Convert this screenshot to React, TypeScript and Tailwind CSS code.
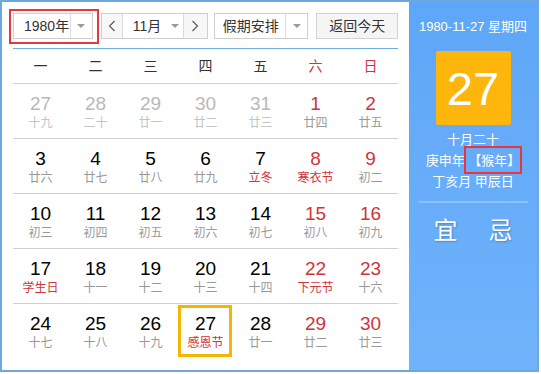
import React from "react";

type Cell = { d: number; l: string; other?: boolean; red?: boolean; lred?: boolean; today?: boolean };

const rows: Cell[][] = [
  [
    { d: 27, l: "十九", other: true },
    { d: 28, l: "二十", other: true },
    { d: 29, l: "廿一", other: true },
    { d: 30, l: "廿二", other: true },
    { d: 31, l: "廿三", other: true },
    { d: 1, l: "廿四", red: true },
    { d: 2, l: "廿五", red: true },
  ],
  [
    { d: 3, l: "廿六" },
    { d: 4, l: "廿七" },
    { d: 5, l: "廿八" },
    { d: 6, l: "廿九" },
    { d: 7, l: "立冬", lred: true },
    { d: 8, l: "寒衣节", red: true, lred: true },
    { d: 9, l: "初二", red: true },
  ],
  [
    { d: 10, l: "初三" },
    { d: 11, l: "初四" },
    { d: 12, l: "初五" },
    { d: 13, l: "初六" },
    { d: 14, l: "初七" },
    { d: 15, l: "初八", red: true },
    { d: 16, l: "初九", red: true },
  ],
  [
    { d: 17, l: "学生日", lred: true },
    { d: 18, l: "十一" },
    { d: 19, l: "十二" },
    { d: 20, l: "十三" },
    { d: 21, l: "十四" },
    { d: 22, l: "下元节", red: true, lred: true },
    { d: 23, l: "十六", red: true },
  ],
  [
    { d: 24, l: "十七" },
    { d: 25, l: "十八" },
    { d: 26, l: "十九" },
    { d: 27, l: "感恩节", lred: true, today: true },
    { d: 28, l: "廿一" },
    { d: 29, l: "廿二", red: true },
    { d: 30, l: "廿三", red: true },
  ],
];

const Caret = () => (
  <span className="block w-0 h-0 border-l-[4px] border-r-[4px] border-t-[4px] border-l-transparent border-r-transparent border-t-[#9a9a9a]" />
);

const Chevron = ({ dir }: { dir: "l" | "r" }) => (
  <svg width="8" height="12" viewBox="0 0 8 12">
    <path
      d={dir === "l" ? "M6.5 1 L1.5 6 L6.5 11" : "M1.5 1 L6.5 6 L1.5 11"}
      fill="none"
      stroke="#555"
      strokeWidth="1.1"
    />
  </svg>
);

export default function App() {
  return (
    <div className="w-[541px] h-[374px] bg-white font-['Liberation_Sans','Noto_Sans_CJK_SC',sans-serif]">
      <div className="w-[539px] h-[372px] border-2 border-[#6ea7db] flex">
        {/* left */}
        <div className="w-[407px] h-full bg-white px-[11px] pt-[11px] flex flex-col">
          {/* toolbar */}
          <div className="flex h-[26px] items-stretch text-[14px] text-[#333] whitespace-nowrap">
            <div className="relative w-[80px] flex border border-[#cfcfcf] bg-white">
              <div className="w-[56px] flex items-center pl-[10px] whitespace-nowrap">1980年</div>
              <div className="flex-1 border-l border-[#dcdcdc] flex items-center justify-center">
                <Caret />
              </div>
              <div className="absolute -left-[5px] -top-[5px] -right-[7px] -bottom-[6px] border-2 border-[#e8363c]" />
            </div>
            <div className="ml-[8px] flex border border-[#cfcfcf]">
              <div className="w-[21px] bg-[#f7f7f7] flex items-center justify-center border-r border-[#dcdcdc]">
                <Chevron dir="l" />
              </div>
              <div className="w-[60px] flex items-center pl-[10px] gap-[10px] bg-white">
                <span>11月</span>
                <Caret />
              </div>
              <div className="w-[24px] bg-[#f7f7f7] flex items-center justify-center border-l border-[#dcdcdc]">
                <Chevron dir="r" />
              </div>
            </div>
            <div className="ml-[6px] w-[95px] flex border border-[#cfcfcf] bg-white">
              <div className="w-[70px] flex items-center pl-[8px]">假期安排</div>
              <div className="flex-1 border-l border-[#dcdcdc] flex items-center justify-center">
                <Caret />
              </div>
            </div>
            <div className="ml-[8px] w-[82px] flex items-center justify-center border border-[#d2d2d2] bg-[#f5f5f5]">
              返回今天
            </div>
          </div>
          <div className="mt-[9px] h-[1px] bg-[#6eaee0]" />
          {/* header */}
          <div className="grid grid-cols-7 h-[34px] items-center text-[14px]">
            {["一", "二", "三", "四", "五", "六", "日"].map((w, i) => (
              <div key={w} className={`text-center ${i >= 5 ? "text-[#d0343b]" : "text-[#333]"}`}>
                {w}
              </div>
            ))}
          </div>
          {rows.map((r, ri) => (
            <div key={ri} className="grid grid-cols-7 h-[55px] border-t border-[#d0d0d0]">
              {r.map((c, ci) => (
                <div key={ci} className="relative flex flex-col items-center pt-[10px]">
                  <div
                    className={`h-[20px] leading-[20px] text-[19px] ${
                      c.other ? "text-[#b8b8b8]" : c.red ? "text-[#d0343b]" : "text-black"
                    }`}
                  >
                    {c.d}
                  </div>
                  <div
                    className={`mt-[1px] h-[16px] leading-[16px] text-[12px] ${
                      c.other ? "text-[#c4c4c4]" : c.lred ? "text-[#d0343b]" : "text-[#999]"
                    }`}
                  >
                    {c.l}
                  </div>
                  {c.today && (
                    <div className="absolute left-0 right-[1px] top-[1px] bottom-[1px] border-[3px] border-[#f7b400]" />
                  )}
                </div>
              ))}
            </div>
          ))}
        </div>
        {/* right */}
        <div className="flex-1 h-full bg-gradient-to-b from-[#5ea6f7] to-[#70b3fb] flex flex-col items-center text-white">
          <div className="mt-[17px] text-[13px] leading-[16px]">1980-11-27 星期四</div>
          <div className="mt-[16px] w-[75px] h-[74px] rounded-[2px] bg-[#feb50c] flex items-center justify-center">
            <span className="text-[47px] leading-none">27</span>
          </div>
          <div className="mt-[4px] text-[13px] leading-[21px] text-center">
            <div>十月二十</div>
            <div>
              庚申年{" "}
              <span className="relative inline-block">
                【猴年】
                <span className="absolute -left-[4px] -right-[2px] -top-[4px] -bottom-[3px] border-2 border-[#e8363c]" />
              </span>
            </div>
            <div>丁亥月 甲辰日</div>
          </div>
          <div className="mt-[9px] w-[109px] h-[2px] bg-[#8cc3fc]" />
          <div className="mt-[13px] flex gap-[31px] text-[24px] leading-[30px] [text-shadow:1px_1px_2px_rgba(0,0,0,0.25)]">
            <span>宜</span>
            <span>忌</span>
          </div>
        </div>
      </div>
    </div>
  );
}
